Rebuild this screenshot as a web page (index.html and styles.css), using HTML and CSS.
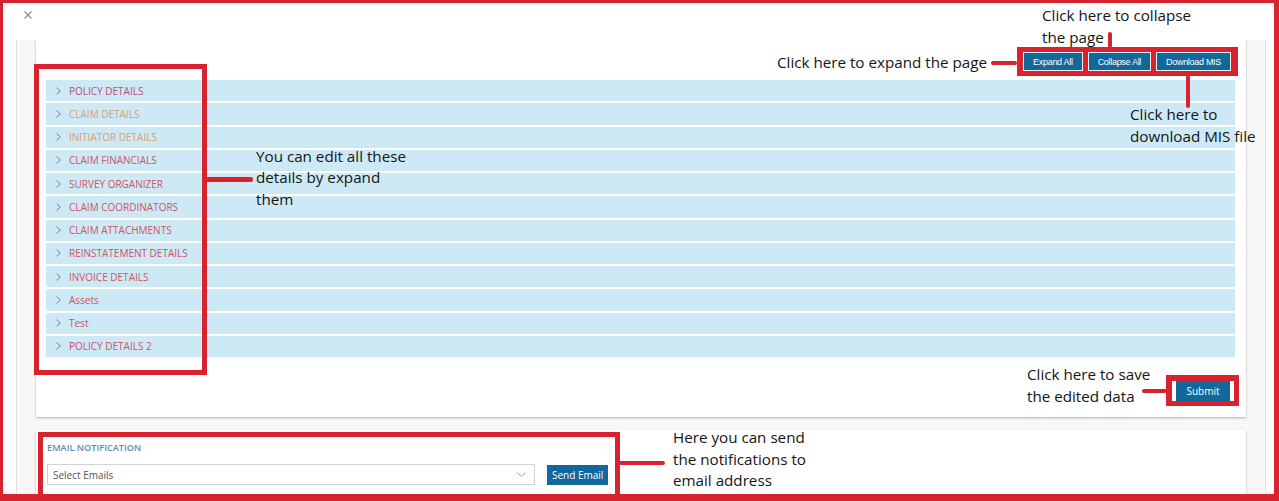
FILE: index.html
```html
<!DOCTYPE html>
<html>
<head>
<meta charset="utf-8">
<title>Claim details</title>
<link rel="stylesheet" href="styles.css">
</head>
<body>
<div class="frame">
  <div class="modal-head">
    <span class="close"><svg width="8" height="8" viewBox="0 0 8 8"><path d="M0.5 0.5L7.5 7.5M7.5 0.5L0.5 7.5" stroke="#8a8a8a" stroke-width="1.1" fill="none"/></svg></span>
  </div>
  <div class="content">
    <section class="card main-card">
      <div class="toolbar">
        <div class="hl-group">
          <button class="btn btn-sm">Expand All</button>
          <button class="btn btn-sm">Collapse All</button>
          <button class="btn btn-sm">Download MIS</button>
        </div>
      </div>
      <div class="accordion">
        <div class="acc-row"><svg class="chev" viewBox="0 0 5 8"><path d="M0.6 0.6L4.3 4L0.6 7.4" stroke="#7d7d7d" stroke-width="1" fill="none"/></svg><span class="acc-label mauve">POLICY DETAILS</span></div>
        <div class="acc-row"><svg class="chev" viewBox="0 0 5 8"><path d="M0.6 0.6L4.3 4L0.6 7.4" stroke="#7d7d7d" stroke-width="1" fill="none"/></svg><span class="acc-label orange">CLAIM DETAILS</span></div>
        <div class="acc-row"><svg class="chev" viewBox="0 0 5 8"><path d="M0.6 0.6L4.3 4L0.6 7.4" stroke="#7d7d7d" stroke-width="1" fill="none"/></svg><span class="acc-label orange">INITIATOR DETAILS</span></div>
        <div class="acc-row"><svg class="chev" viewBox="0 0 5 8"><path d="M0.6 0.6L4.3 4L0.6 7.4" stroke="#7d7d7d" stroke-width="1" fill="none"/></svg><span class="acc-label red">CLAIM FINANCIALS</span></div>
        <div class="acc-row"><svg class="chev" viewBox="0 0 5 8"><path d="M0.6 0.6L4.3 4L0.6 7.4" stroke="#7d7d7d" stroke-width="1" fill="none"/></svg><span class="acc-label red">SURVEY ORGANIZER</span></div>
        <div class="acc-row"><svg class="chev" viewBox="0 0 5 8"><path d="M0.6 0.6L4.3 4L0.6 7.4" stroke="#7d7d7d" stroke-width="1" fill="none"/></svg><span class="acc-label red">CLAIM COORDINATORS</span></div>
        <div class="acc-row"><svg class="chev" viewBox="0 0 5 8"><path d="M0.6 0.6L4.3 4L0.6 7.4" stroke="#7d7d7d" stroke-width="1" fill="none"/></svg><span class="acc-label red">CLAIM ATTACHMENTS</span></div>
        <div class="acc-row"><svg class="chev" viewBox="0 0 5 8"><path d="M0.6 0.6L4.3 4L0.6 7.4" stroke="#7d7d7d" stroke-width="1" fill="none"/></svg><span class="acc-label red">REINSTATEMENT DETAILS</span></div>
        <div class="acc-row"><svg class="chev" viewBox="0 0 5 8"><path d="M0.6 0.6L4.3 4L0.6 7.4" stroke="#7d7d7d" stroke-width="1" fill="none"/></svg><span class="acc-label red">INVOICE DETAILS</span></div>
        <div class="acc-row"><svg class="chev" viewBox="0 0 5 8"><path d="M0.6 0.6L4.3 4L0.6 7.4" stroke="#7d7d7d" stroke-width="1" fill="none"/></svg><span class="acc-label red">Assets</span></div>
        <div class="acc-row"><svg class="chev" viewBox="0 0 5 8"><path d="M0.6 0.6L4.3 4L0.6 7.4" stroke="#7d7d7d" stroke-width="1" fill="none"/></svg><span class="acc-label red">Test</span></div>
        <div class="acc-row"><svg class="chev" viewBox="0 0 5 8"><path d="M0.6 0.6L4.3 4L0.6 7.4" stroke="#7d7d7d" stroke-width="1" fill="none"/></svg><span class="acc-label red">POLICY DETAILS 2</span></div>
      </div>
      <div class="card-foot">
        <div class="hl-submit"><button class="btn btn-submit">Submit</button></div>
      </div>
    </section>
    <section class="card email-card">
      <div class="email-title">EMAIL NOTIFICATION</div>
      <div class="email-row">
        <div class="select"><span>Select Emails</span><svg class="caret" viewBox="0 0 9 5"><path d="M0.5 0.5L4.5 4.5L8.5 0.5" stroke="#9a9a9a" stroke-width="0.9" fill="none"/></svg></div>
        <button class="btn btn-send">Send Email</button>
      </div>
    </section>
  </div>
</div>

<div class="hl-box list-box"></div>
<div class="hl-box email-box"></div>

<div class="conn c-expand"></div>
<div class="conn c-collapse"></div>
<div class="conn c-download"></div>
<div class="conn c-list"></div>
<div class="conn c-submit"></div>
<div class="conn c-email"></div>

<div class="note n-collapse">Click here to collapse<br>the page</div>
<div class="note n-expand">Click here to expand the page</div>
<div class="note n-download">Click here to<br>download MIS file</div>
<div class="note n-list">You can edit all these<br>details by expand<br>them</div>
<div class="note n-submit">Click here to save<br>the edited data</div>
<div class="note n-email">Here you can send<br>the notifications to<br>email address</div>
</body>
</html>
```

FILE: styles.css
```css
* {
  box-sizing: border-box;
  margin: 0;
  padding: 0;
}

html, body {
  width: 1279px;
  height: 501px;
  overflow: hidden;
}

body {
  font-family: "Open Sans", "Noto Sans", sans-serif;
  background: #fff;
}

.frame {
  width: 1279px;
  height: 501px;
  border-style: solid;
  border-color: #d8222d;
  border-width: 3px 5px 7px 3px;
  background: #fff;
  display: flex;
  flex-direction: column;
  overflow: hidden;
}

.modal-head {
  height: 37px;
  flex: none;
  padding: 8px 0 0 21px;
}

.close {
  display: block;
  width: 8px;
  height: 8px;
}

.close svg {
  display: block;
}

.content {
  flex: 1;
  margin: 0 8px 0 13px;
  background: #f9f6f6;
  border-left: 1px solid #e4e0e0;
  border-right: 1px solid #e4e0e0;
  padding: 0 19px;
  overflow: hidden;
}

.card {
  background: #fff;
  box-shadow: 0 1px 2px rgba(0, 0, 0, 0.28);
}

.main-card {
  height: 377px;
  padding-top: 7px;
}

.toolbar {
  display: flex;
  justify-content: flex-end;
  padding-right: 8px;
}

.hl-group {
  display: flex;
  gap: 5px;
  background: #d8222d;
  padding: 5px 7px 5px 6px;
}

.btn {
  font-family: inherit;
  border: none;
  background: #12679b;
  color: #fff;
  cursor: pointer;
}

.btn-sm {
  height: 19px;
  padding: 0 9px;
  border: 1px solid #eef3f6;
  font-family: "Liberation Sans", Arial, sans-serif;
  font-size: 9px;
  letter-spacing: -0.3px;
}

.accordion {
  margin-top: 4px;
  padding: 0 11px 0 10px;
  display: flex;
  flex-direction: column;
  gap: 2px;
}

.acc-row {
  height: 21.25px;
  background: #cde9f5;
  display: flex;
  align-items: center;
  padding-left: 10px;
}

.chev {
  width: 5px;
  height: 8px;
  margin-right: 8px;
  flex: none;
}

.acc-label {
  font-size: 10px;
  line-height: 1;
}

.red { color: #cf5562; }
.mauve { color: #c0507a; }
.orange { color: #dba070; }

.card-foot {
  display: flex;
  justify-content: flex-end;
  margin-top: 18px;
  padding-right: 7px;
}

.hl-submit {
  background: #d8222d;
  padding: 6px 5px 5px 6px;
}

.btn-submit {
  display: block;
  height: 20px;
  width: 62px;
  border-left: 4px solid #fff;
  border-right: 4px solid #fff;
  font-size: 10px;
}

.email-card {
  margin-top: 13px;
  height: 90px;
  padding: 12px 0 0 11px;
}

.email-title {
  font-size: 9.2px;
  font-weight: 600;
  line-height: 12px;
  color: #5a8db0;
  margin-bottom: 10px;
}

.email-row {
  display: flex;
  align-items: center;
  gap: 12px;
}

.select {
  width: 488px;
  height: 21px;
  border: 1px solid #d2d2d2;
  background: #fff;
  display: flex;
  align-items: center;
  justify-content: space-between;
  padding: 0 8px 0 5px;
  font-size: 10px;
  color: #555;
}

.caret {
  width: 9px;
  height: 5px;
}

.btn-send {
  height: 20px;
  padding: 0 5px;
  font-size: 10px;
}

/* annotation overlays */
.hl-box {
  position: absolute;
  border: 5px solid #d8222d;
  pointer-events: none;
}

.list-box {
  left: 34px;
  top: 64px;
  width: 173px;
  height: 311px;
}

.email-box {
  left: 38px;
  top: 432px;
  width: 582px;
  height: 75px;
}

.conn {
  position: absolute;
  background: #d8222d;
  border-radius: 2px;
}

.c-expand { left: 991px; top: 61px; width: 26px; height: 4px; }
.c-collapse { left: 1108px; top: 32px; width: 4px; height: 16px; }
.c-download { left: 1186px; top: 75px; width: 4px; height: 33px; }
.c-list { left: 206px; top: 177px; width: 47px; height: 5px; }
.c-submit { left: 1142px; top: 389px; width: 25px; height: 4px; }
.c-email { left: 619px; top: 461px; width: 46px; height: 4px; }

.note {
  position: absolute;
  font-family: "Open Sans", "Noto Sans", sans-serif;
  font-size: 15.2px;
  line-height: 21.6px;
  color: #151515;
  white-space: nowrap;
}

.n-collapse { left: 1042px; top: 5px; }
.n-expand { left: 777px; top: 51.5px; }
.n-download { left: 1130px; top: 104px; }
.n-list { left: 256px; top: 145.5px; }
.n-submit { left: 1027px; top: 364px; }
.n-email { left: 673px; top: 427px; }
```
